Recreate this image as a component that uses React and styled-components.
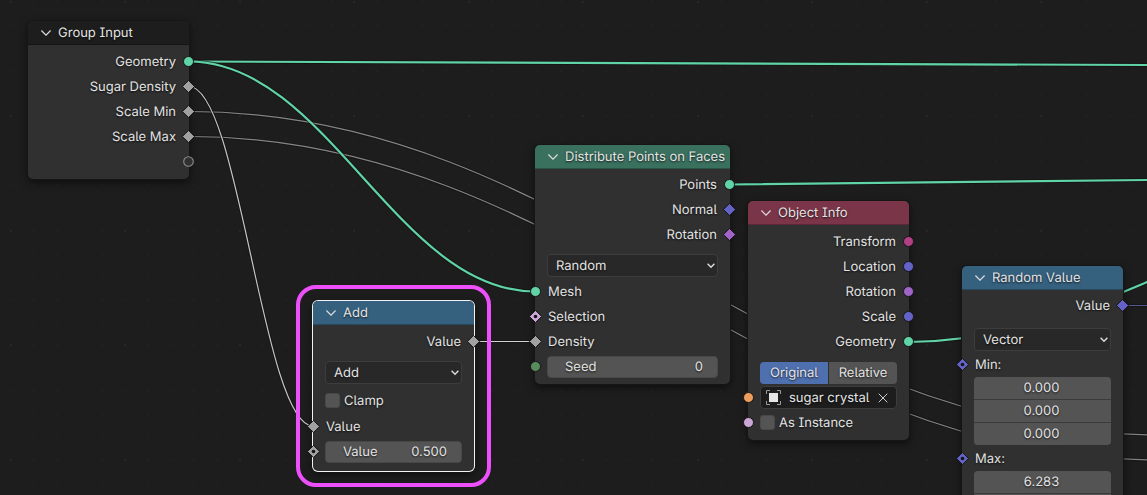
import React, { useState } from 'react';
import styled, { createGlobalStyle, css } from 'styled-components';

const GlobalStyle = createGlobalStyle`
  * {
    box-sizing: border-box;
  }
  body {
    margin: 0;
    background: #1d1d1d;
  }
  body, button, input, select {
    font-family: Inter, "Liberation Sans", sans-serif;
    font-size: 13px;
    font-feature-settings: "cv05", "cv08";
    text-rendering: geometricPrecision;
    color: #e4e4e4;
    text-shadow: 0 1px 2px rgba(0, 0, 0, 0.8);
  }
`;

const colors = {
  geometry: '#60d4a6',
  float: '#a1a1a1',
  vector: '#6363c7',
  rotation: '#a063c7',
  matrix: '#b33f85',
  boolean: '#cca6d6',
  integer: '#598c5c',
  object: '#ed9e5c',
};

const Canvas = styled.main`
  position: relative;
  height: 100vh;
  overflow: hidden;
`;

const Layer = styled.svg`
  position: absolute;
  top: 0;
  left: 0;
  width: 100%;
  height: 100%;
  pointer-events: none;
`;

const NodeBox = styled.section`
  position: absolute;
  left: ${(p) => p.$x}px;
  top: ${(p) => p.$y}px;
  width: ${(p) => p.$width}px;
  border-radius: 5px;
  background: #303030;
  box-shadow: ${(p) => (p.$selected ? '0 0 0 1px #f2f2f2, ' : '0 0 0 1px #161616, ')}0 3px 9px rgba(0, 0, 0, 0.6);
`;

const NodeHeader = styled.header`
  display: flex;
  align-items: center;
  gap: 7px;
  height: 24px;
  padding: 0 12px 0 13px;
  border-radius: 5px 5px 0 0;
  border-bottom: 1px solid rgba(0, 0, 0, 0.25);
  background: ${(p) => p.$color};
`;

const NodeTitle = styled.h2`
  margin: 0;
  font-size: 13px;
  font-weight: 400;
  line-height: 16px;
  white-space: nowrap;
`;

const bareButton = css`
  display: flex;
  align-items: center;
  justify-content: center;
  padding: 0;
  border: 0;
  background: none;
  cursor: pointer;
`;

const CollapseButton = styled.button`
  ${bareButton}
`;

const NodeBody = styled.div`
  display: flex;
  flex-direction: column;
  padding: ${(p) => p.$top}px 12px ${(p) => p.$bottom}px;
`;

const Row = styled.div`
  position: relative;
  display: flex;
  align-items: center;
  justify-content: ${(p) => (p.$output ? 'flex-end' : 'flex-start')};
  height: 25px;
  margin-top: ${(p) => p.$gap || 0}px;
  line-height: 16px;
`;

const RowText = styled.span`
  padding: 0 1px;
`;

const SocketIcon = styled.svg`
  position: absolute;
  top: 5px;
  ${(p) => (p.$side === 'right' ? 'right: -19px;' : 'left: -19px;')}
  width: 15px;
  height: 15px;
`;

const SelectWrap = styled.span`
  position: relative;
  display: flex;
  flex: 1;
  svg {
    position: absolute;
    right: 3px;
    top: 9px;
    pointer-events: none;
  }
`;

const SelectBox = styled.select`
  appearance: none;
  width: 100%;
  height: 23px;
  padding: 0 20px 0 8px;
  border: 1px solid #3d3d3d;
  border-radius: 4px;
  background: #282828;
`;

const CheckLabel = styled.label`
  display: flex;
  align-items: center;
  gap: 4px;
`;

const CheckBox = styled.input`
  appearance: none;
  width: 15px;
  height: 15px;
  margin: 0;
  border: 1px solid #494949;
  border-radius: 3px;
  background: #545454;
  &:checked {
    background: #4772b3;
  }
`;

const NumberLabel = styled.label`
  display: flex;
  flex: 1;
  align-items: center;
  height: 22px;
  padding: 0 14px 0 17px;
  border: 1px solid #484848;
  border-radius: 4px;
  background: #545454;
`;

const NumberInput = styled.input`
  flex: 1;
  width: 20px;
  min-width: 0;
  padding: 0;
  border: 0;
  background: none;
  text-align: right;
`;

const VectorBox = styled.div`
  display: flex;
  flex-direction: column;
  gap: 1px;
  margin-bottom: 1px;
  border-radius: 4px;
  background: #3a3a3a;
  overflow: hidden;
`;

const VectorInput = styled.input`
  width: 100%;
  height: 22px;
  padding: 0 2px 1px 0;
  border: 0;
  background: #545454;
  text-align: center;
`;

const Toggle = styled.div`
  display: flex;
  flex: 1;
  gap: 1px;
  height: 22px;
  border-radius: 4px;
  overflow: hidden;
`;

const ToggleButton = styled.button`
  ${bareButton}
  flex: 1;
  background: ${(p) => (p.$active ? '#4f70ae' : '#545454')};
`;

const ObjectField = styled.div`
  display: flex;
  flex: 1;
  align-items: center;
  gap: 7px;
  width: 100%;
  height: 23px;
  padding: 0 8px 0 4px;
  border: 1px solid #3d3d3d;
  border-radius: 4px;
  background: #1d1d1d;
`;

const ObjectInput = styled.input`
  flex: 1;
  min-width: 0;
  padding: 0;
  border: 0;
  background: none;
`;

const ClearButton = styled.button`
  ${bareButton}
`;

const Highlight = styled.div`
  position: absolute;
  left: 296px;
  top: 285px;
  width: 195px;
  height: 202px;
  border: 4px solid #ed50fb;
  border-radius: 20px;
  pointer-events: none;
`;

const HeaderChevron = () => (
  <svg width="10" height="6" viewBox="0 0 10 6" fill="none" stroke="#dcdcdc" strokeWidth="1.2" aria-hidden="true">
    <path d="M0.4 0.5 5 5.1 9.6 0.5" />
  </svg>
);

const SelectChevron = () => (
  <svg width="8" height="6" viewBox="0 0 8 6" fill="none" stroke="#dedede" strokeWidth="1.4" aria-hidden="true">
    <path d="M0.6 0.8 4 4.3 7.4 0.8" />
  </svg>
);

const Socket = ({ side, type, shape = 'circle' }) => {
  const color = colors[type];
  return (
    <SocketIcon $side={side} viewBox="0 0 15 15" aria-hidden="true">
      {shape === 'circle' && <circle cx="7.5" cy="7.5" r="5" fill={color} stroke="#151515" />}
      {shape === 'empty' && <circle cx="7.5" cy="7.5" r="4.8" fill="#303030" stroke="#8c8c8c" strokeWidth="1.1" />}
      {(shape === 'diamond' || shape === 'dot') && (
        <path d="M7.5 1.4 13.6 7.5 7.5 13.6 1.4 7.5Z" fill={color} stroke="#151515" strokeLinejoin="round" />
      )}
      {shape === 'dot' && <circle cx="7.5" cy="7.5" r="1.8" fill="#151515" />}
    </SocketIcon>
  );
};

const Output = ({ label, type, shape }) => (
  <Row $output>
    <RowText>{label}</RowText>
    <Socket side="right" type={type} shape={shape} />
  </Row>
);

const Input = ({ label, type, shape, children, gap }) => (
  <Row $gap={gap}>
    <Socket side="left" type={type} shape={shape} />
    {label && <RowText>{label}</RowText>}
    {children}
  </Row>
);

const Dropdown = ({ label, options }) => (
  <SelectWrap>
    <SelectBox aria-label={label}>
      {options.map((option) => <option key={option}>{option}</option>)}
    </SelectBox>
    <SelectChevron />
  </SelectWrap>
);

const NumberField = ({ label, value }) => (
  <NumberLabel>
    {label}
    <NumberInput type="text" inputMode="decimal" defaultValue={value} />
  </NumberLabel>
);

const VectorField = ({ label, values }) => (
  <VectorBox>
    {values.map((value, i) => (
      <VectorInput key={i} type="text" inputMode="decimal" aria-label={`${label} ${'XYZ'[i]}`} defaultValue={value} />
    ))}
  </VectorBox>
);

const Node = ({ title, color, x, y, width = 161, selected, top = 4, bottom = 5, children }) => {
  const [open, setOpen] = useState(true);
  return (
    <NodeBox $x={x} $y={y} $width={width} $selected={selected}>
      <NodeHeader $color={color}>
        <CollapseButton type="button" aria-label={`Collapse ${title}`} aria-expanded={open} onClick={() => setOpen(!open)}>
          <HeaderChevron />
        </CollapseButton>
        <NodeTitle>{title}</NodeTitle>
      </NodeHeader>
      {open && <NodeBody $top={top} $bottom={bottom}>{children}</NodeBody>}
    </NodeBox>
  );
};

const DOT_STEPS = [1, 24, 47, 70, 93, 115, 138, 161, 184, 207];

const Grid = () => (
  <Layer aria-hidden="true">
    <defs>
      <pattern id="dots" x="10" y="1" width="229" height="229" patternUnits="userSpaceOnUse">
        {DOT_STEPS.map((cx, i) => DOT_STEPS.map((cy, j) => (
          <circle key={`${cx}-${cy}`} cx={cx} cy={cy} r="1" fill={i % 5 === 0 && j % 5 === 0 ? '#2a2a2a' : '#222222'} />
        )))}
      </pattern>
    </defs>
    <rect width="100%" height="100%" fill="url(#dots)" />
  </Layer>
);

const links = [
  { d: 'M189 111.5 C577 111.5 770 435 1158 435 H4000', color: '#858585', width: 1 },
  { d: 'M189 136.5 C577 136.5 770 460 1158 460 H4000', color: '#858585', width: 1 },
  { d: 'M1123 305.5 H4000', color: '#5a5a92', width: 1 },
  { d: 'M189 61.5 L1147 65 L4000 76', color: colors.geometry, width: 2 },
  { d: 'M730 184.5 L1147 180 L4000 149', color: colors.geometry, width: 2 },
  { d: 'M909 342 C1010 341 1090 306 1147 282 L1500 132', color: colors.geometry, width: 2 },
  { d: 'M189 61.5 C327 61.5 397 291.5 535 291.5', color: colors.geometry, width: 2 },
  { d: 'M189 86.5 C239 86.5 263 426 313 426', color: '#c4c4c4', width: 1 },
  { d: 'M474 341.5 H535', color: '#d4d4d4', width: 1 },
];

const Links = () => (
  <Layer fill="none" aria-hidden="true">
    {links.map(({ d, color, width }) => (
      <g key={d}>
        <path d={d} stroke="#111111" strokeOpacity="0.6" strokeWidth={width + 2} />
        <path d={d} stroke={color} strokeWidth={width + 0.2} />
      </g>
    ))}
  </Layer>
);

const ObjectIcon = () => (
  <svg width="17" height="17" viewBox="0 0 17 17" aria-hidden="true">
    <path d="M5 1.5H1.5V5M12 1.5H15.5V5M5 15.5H1.5V12M12 15.5H15.5V12" fill="none" stroke="#9a9a9a" />
    <rect x="4" y="4" width="9" height="9" fill="#e6e6e6" />
  </svg>
);

const App = () => {
  const [mode, setMode] = useState('Original');

  return (
    <>
      <GlobalStyle />
      <Canvas>
        <Grid />
        <Links />

        <Node title="Group Input" color="#1d1d1d" x={28} y={21}>
          <Output label="Geometry" type="geometry" />
          <Output label="Sugar Density" type="float" shape="diamond" />
          <Output label="Scale Min" type="float" shape="diamond" />
          <Output label="Scale Max" type="float" shape="diamond" />
          <Output shape="empty" />
        </Node>

        <Highlight />
        <Node title="Add" color="#35617f" x={313} y={301} selected bottom={7}>
          <Output label="Value" type="float" shape="diamond" />
          <Row $gap={6}>
            <Dropdown label="Operation" options={['Add', 'Subtract', 'Multiply', 'Divide']} />
          </Row>
          <Row $gap={3}>
            <CheckLabel>
              <CheckBox type="checkbox" />
              Clamp
            </CheckLabel>
          </Row>
          <Input label="Value" type="float" shape="diamond" gap={1} />
          <Input type="float" shape="dot">
            <NumberField label="Value" value="0.500" />
          </Input>
        </Node>

        <Node title="Distribute Points on Faces" color="#3a705e" x={535} y={145} width={195} top={3}>
          <Output label="Points" type="geometry" />
          <Output label="Normal" type="vector" shape="diamond" />
          <Output label="Rotation" type="rotation" shape="diamond" />
          <Row $gap={6}>
            <Dropdown label="Distribution method" options={['Random', 'Poisson Disk']} />
          </Row>
          <Input label="Mesh" type="geometry" gap={1} />
          <Input label="Selection" type="boolean" shape="dot" />
          <Input label="Density" type="float" shape="diamond" />
          <Input type="integer">
            <NumberField label="Seed" value="0" />
          </Input>
        </Node>

        <Node title="Object Info" color="#7b3549" x={748} y={201}>
          <Output label="Transform" type="matrix" />
          <Output label="Location" type="vector" />
          <Output label="Rotation" type="rotation" />
          <Output label="Scale" type="vector" />
          <Output label="Geometry" type="geometry" />
          <Row $gap={6}>
            <Toggle>
              {['Original', 'Relative'].map((name) => (
                <ToggleButton key={name} type="button" $active={mode === name} aria-pressed={mode === name} onClick={() => setMode(name)}>
                  {name}
                </ToggleButton>
              ))}
            </Toggle>
          </Row>
          <Input type="object">
            <ObjectField>
              <ObjectIcon />
              <ObjectInput type="text" aria-label="Object" defaultValue="sugar crystal" />
              <ClearButton type="button" aria-label="Clear object">
                <svg width="10" height="10" viewBox="0 0 10 10" fill="none" stroke="#cfcfcf" aria-hidden="true">
                  <path d="M0.7 0.7 9.3 9.3M9.3 0.7 0.7 9.3" />
                </svg>
              </ClearButton>
            </ObjectField>
          </Input>
          <Input type="boolean">
            <CheckLabel>
              <CheckBox type="checkbox" />
              As Instance
            </CheckLabel>
          </Input>
        </Node>

        <Node title="Random Value" color="#35617f" x={962} y={266} top={3}>
          <Output label="Value" type="vector" shape="diamond" />
          <Row $gap={9}>
            <Dropdown label="Data type" options={['Vector', 'Float', 'Integer', 'Boolean']} />
          </Row>
          <Input label="Min:" type="vector" shape="dot" />
          <VectorField label="Min" values={['0.000', '0.000', '0.000']} />
          <Input label="Max:" type="vector" shape="dot" />
          <VectorField label="Max" values={['6.283', '6.283', '6.283']} />
        </Node>
      </Canvas>
    </>
  );
};

export default App;
